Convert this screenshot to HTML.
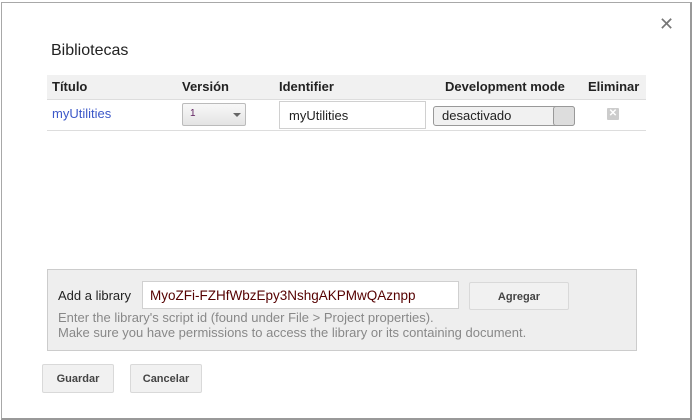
<!DOCTYPE html>
<html><head><meta charset="utf-8"><style>
body{margin:0;width:694px;height:420px;background:#fff;font-family:"Liberation Sans",Arial,sans-serif;position:relative;overflow:hidden}
.dlg{position:absolute;left:1px;top:2px;width:688px;height:415px;border:1px solid #a8a8a8;border-bottom:2px solid #999;border-right:2px solid #999;background:#fff}
.a{position:absolute}
.th{font-weight:bold;font-size:13px;color:#222;top:79px}
.btn{position:absolute;background:#f1f1f1;border:1px solid #d9d9d9;border-radius:2px;font-size:11px;font-weight:bold;color:#444;text-align:center;box-sizing:border-box}
</style></head><body>
<div class="dlg"></div>
<div class="a" style="left:659px;top:14px;font-size:18px;color:#777">✕</div>
<div class="a" style="left:51px;top:42px;font-size:16px;color:#222">Bibliotecas</div>
<div class="a" style="left:47px;top:75px;width:599px;height:24px;background:#f1f1f1;border-bottom:1px solid #ddd"></div>
<div class="a th" style="left:52px">Título</div>
<div class="a th" style="left:182px">Versión</div>
<div class="a th" style="left:279px">Identifier</div>
<div class="a th" style="left:445px">Development mode</div>
<div class="a th" style="left:588px">Eliminar</div>
<div class="a" style="left:47px;top:130px;width:599px;height:1px;background:#ddd"></div>
<div class="a" style="left:52px;top:106px;font-size:13px;color:#3c58c8">myUtilities</div>
<div class="a" style="left:182px;top:103px;width:64px;height:23px;border:1px solid #bbb;border-radius:2px;background:linear-gradient(#f8f8f8,#e4e4e4);box-sizing:border-box"><span style="position:absolute;left:7px;top:4px;font-size:10px;color:#602060">1</span><span style="position:absolute;left:50px;top:9px;border:4px solid transparent;border-top:4px solid #666;border-bottom:0"></span></div>
<div class="a" style="left:279px;top:101px;width:147px;height:28px;border:1px solid #d0d0d0;box-sizing:border-box;font-size:13px;padding:6px 0 0 9px;color:#222">myUtilities</div>
<div class="a" style="left:433px;top:106px;width:142px;height:20px;border:1px solid #999;border-radius:3px;box-sizing:border-box;background:#f1f1f1;font-size:13px;padding:1px 0 0 8px;color:#222">desactivado<span style="position:absolute;right:-1px;top:-1px;width:20px;height:18px;border:1px solid #999;border-radius:3px;background:#ddd"></span></div>
<div class="a" style="left:607px;top:108px;width:12px;height:12px;background:#ccc;border-radius:1px;color:#fff;font-size:10px;line-height:12px;text-align:center;font-weight:bold">✕</div>
<div class="a" style="left:47px;top:269px;width:590px;height:82px;background:#eee;border:1px solid #ccc;box-sizing:border-box"></div>
<div class="a" style="left:58px;top:288px;font-size:13px;color:#222">Add a library</div>
<div class="a" style="left:142px;top:281px;width:317px;height:28px;background:#fff;border:1px solid #d0d0d0;box-sizing:border-box;font-size:13.5px;padding:6px 0 0 7px;color:#500">MyoZFi-FZHfWbzEpy3NshgAKPMwQAznpp</div>
<div class="btn" style="left:469px;top:282px;width:100px;height:28px;padding-top:8px">Agregar</div>
<div class="a" style="left:58px;top:310px;font-size:13px;color:#888;line-height:15px">Enter the library's script id (found under File &gt; Project properties).<br>Make sure you have permissions to access the library or its containing document.</div>
<div class="btn" style="left:42px;top:364px;width:72px;height:29px;padding-top:8px">Guardar</div>
<div class="btn" style="left:130px;top:364px;width:72px;height:29px;padding-top:8px">Cancelar</div>
</body></html>
